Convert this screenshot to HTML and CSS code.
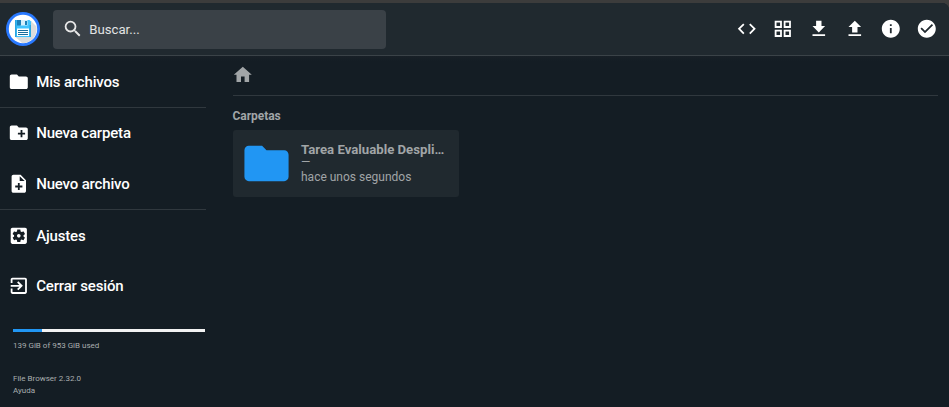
FILE: index.html
```
<!DOCTYPE html>
<html lang="es">
<head>
<meta charset="utf-8">
<title>File Browser</title>
<link rel="stylesheet" href="styles.css">
</head>
<body>
<div class="app">
  <header class="topbar">
    <svg class="logo" viewBox="0 0 34 34">
      <circle cx="17" cy="17" r="17" fill="#2979ff"/>
      <circle cx="17" cy="17" r="14.2" fill="#fff"/>
      <path d="M25 9l5.500 5.500a14.200 14.200 0 0 1-14.500 16.600L9.500 25z" fill="#dcdcdc"/>
      <path d="M9 8h14.500l1.500 1.500V25H9z" fill="#40c4ff"/>
      <path d="M9 8h1.500v17H9zM23.500 13H25v12h-1.500z" fill="#29a5e0"/>
      <path d="M14 8h7.500v5.500H14z" fill="#d5effc"/>
      <path d="M11 8h4v5.500h-4zM19 9h2v4h-2z" fill="#1c7fb8"/>
      <path d="M11 16.500h12V24H11z" fill="#fff"/>
      <path d="M12 18h10v1H12zM12 20h10v1H12zM12 22h10v1H12z" fill="#1b6e9c"/>
    </svg>
    <div class="search">
      <svg class="icon" viewBox="0 0 24 24"><path d="M15.500 14h-.79l-.28-.27A6.471 6.471 0 0 0 16 9.500 6.500 6.500 0 1 0 9.500 16c1.610 0 3.090-.59 4.230-1.570l.27.28v.79l5 4.990L20.490 19l-4.990-5zm-6 0C7.010 14 5 11.990 5 9.500S7.010 5 9.500 5 14 7.010 14 9.500 11.990 14 9.500 14z"/></svg>
      <span>Buscar...</span>
    </div>
    <div class="actions">
      <svg class="icon" viewBox="0 0 24 24"><path d="M9.400 16.600L4.800 12l4.600-4.600L8 6l-6 6 6 6 1.400-1.400zm5.200 0l4.600-4.600-4.600-4.600L16 6l6 6-6 6-1.400-1.400z"/></svg>
      <svg class="icon" viewBox="0 0 24 24"><path fill-rule="evenodd" d="M3 3v8h8V3H3zm6 6H5V5h4v4zm-6 4v8h8v-8H3zm6 6H5v-4h4v4zm4-16v8h8V3h-8zm6 6h-4V5h4v4zm-6 4v8h8v-8h-8zm6 6h-4v-4h4v4z"/></svg>
      <svg class="icon" viewBox="0 0 24 24"><path d="M19 9h-4V3H9v6H5l7 7 7-7zM5 18v2h14v-2H5z"/></svg>
      <svg class="icon" viewBox="0 0 24 24"><path d="M9 16h6v-6h4l-7-7-7 7h4v6zm-4 2h14v2H5v-2z"/></svg>
      <svg class="icon" viewBox="0 0 24 24"><path d="M12 2C6.480 2 2 6.480 2 12s4.480 10 10 10 10-4.480 10-10S17.520 2 12 2zm1 15h-2v-6h2v6zm0-8h-2V7h2v2z"/></svg>
      <svg class="icon" viewBox="0 0 24 24"><path d="M12 2C6.480 2 2 6.480 2 12s4.480 10 10 10 10-4.480 10-10S17.520 2 12 2zm-2 15l-5-5 1.410-1.410L10 14.170l7.590-7.590L19 8l-9 9z"/></svg>
    </div>
  </header>
  <div class="body">
    <nav class="sidebar">
      <div class="group files">
        <a class="item"><svg class="icon" viewBox="0 0 24 24"><path d="M10 4H4c-1.100 0-1.990.9-1.990 2L2 18c0 1.100.9 2 2 2h16c1.100 0 2-.9 2-2V8c0-1.100-.9-2-2-2h-8l-2-2z"/></svg><span>Mis archivos</span></a>
      </div>
      <div class="group">
        <a class="item"><svg class="icon" viewBox="0 0 24 24"><path d="M20 6h-8l-2-2H4c-1.110 0-1.990.89-1.990 2L2 18c0 1.110.89 2 2 2h16c1.110 0 2-.89 2-2V8c0-1.110-.89-2-2-2zm-1 8h-3v3h-2v-3h-3v-2h3V9h2v3h3v2z"/></svg><span>Nueva carpeta</span></a>
        <a class="item"><svg class="icon" viewBox="0 0 24 24"><path d="M14 2H6c-1.100 0-1.990.9-1.990 2L4 20c0 1.100.89 2 1.990 2H18c1.100 0 2-.9 2-2V8l-6-6zm2 14h-3v3h-2v-3H8v-2h3v-3h2v3h3v2zm-3-7V3.500L18.500 9H13z"/></svg><span>Nuevo archivo</span></a>
      </div>
      <div class="group account">
        <a class="item"><svg class="icon" viewBox="0 0 24 24"><path d="M12 10c-1.100 0-2 .9-2 2s.9 2 2 2 2-.9 2-2-.9-2-2-2zm7-7H5c-1.110 0-2 .9-2 2v14c0 1.100.89 2 2 2h14c1.110 0 2-.9 2-2V5c0-1.100-.89-2-2-2zm-1.750 9c0 .23-.02.46-.05.68l1.480 1.160c.13.11.17.3.08.45l-1.400 2.420c-.09.15-.27.21-.43.15l-1.740-.7c-.36.28-.76.51-1.180.69l-.26 1.850c-.03.17-.18.3-.35.3h-2.800c-.17 0-.32-.13-.35-.29l-.26-1.850c-.43-.18-.82-.41-1.180-.69l-1.740.7c-.16.06-.34 0-.43-.15l-1.400-2.420c-.09-.15-.05-.34.08-.45l1.480-1.160c-.03-.23-.05-.46-.05-.69s.02-.46.05-.68l-1.480-1.160c-.13-.11-.17-.3-.08-.45l1.400-2.420c.09-.15.27-.21.43-.15l1.740.7c.36-.28.76-.51 1.180-.69l.26-1.850c.03-.17.18-.3.35-.3h2.800c.17 0 .32.13.35.29l.26 1.850c.43.18.82.41 1.180.69l1.740-.7c.16-.06.34 0 .43.15l1.400 2.420c.09.15.05.34-.08.45l-1.480 1.160c.03.23.05.46.05.69z"/></svg><span>Ajustes</span></a>
        <a class="item"><svg class="icon" viewBox="0 0 24 24"><path d="M10.090 15.590L11.500 17l5-5-5-5-1.410 1.410L12.670 11H3v2h9.670l-2.580 2.590zM19 3H5c-1.110 0-2 .9-2 2v4h2V5h14v14H5v-4H3v4c0 1.100.89 2 2 2h14c1.100 0 2-.9 2-2V5c0-1.100-.9-2-2-2z"/></svg><span>Cerrar sesión</span></a>
      </div>
      <div class="usage"><div class="used"></div></div>
      <p class="credit">139 GiB of 953 GiB used</p>
      <p class="credit version">File Browser 2.32.0</p>
      <p class="credit">Ayuda</p>
    </nav>
    <main class="listing">
      <div class="breadcrumbs"><svg class="icon" viewBox="0 0 24 24"><path d="M10 20v-6h4v6h5v-8h3L12 3 2 12h3v8z"/></svg></div>
      <h2>Carpetas</h2>
      <div class="card">
        <svg class="folder" viewBox="0 0 24 24"><path d="M10 4H4c-1.100 0-1.990.9-1.990 2L2 18c0 1.100.9 2 2 2h16c1.100 0 2-.9 2-2V8c0-1.100-.9-2-2-2h-8l-2-2z"/></svg>
        <div class="meta">
          <p class="name">Tarea Evaluable Despli…</p>
          <p class="size">—</p>
          <p class="modified">hace unos segundos</p>
        </div>
      </div>
    </main>
  </div>
</div>
</body>
</html>
```
FILE: styles.css
```
* { box-sizing: border-box; }
body { margin: 0; background: #3c3c3c; font-family: Roboto, sans-serif; padding-top: 3px; overflow: hidden; }
p, h2 { margin: 0; }
svg { display: block; flex: none; }
.icon { width: 21.6px; height: 21.6px; fill: #fff; }
.app { height: 404px; background: #141d24; border-top-right-radius: 7px; overflow: hidden; }
.topbar { height: 53px; background: #20292f; border-bottom: 1px solid #3b4348; display: flex; align-items: center; padding: 0 11.4px 0 6px; }
.logo { width: 34px; height: 34px; }
.search { width: 333px; height: 39px; margin-left: 13px; padding-left: 9px; border-radius: 4px; background: #3a4147; color: #e2e3e4; display: flex; align-items: center; gap: 5.600px; font-size: 13.2px; }
.search .icon { fill: #e8e8e8; }
.actions { margin-left: auto; display: flex; gap: 14.4px; }
.body { display: flex; background: linear-gradient(#182027, #141d24 5px); }
.sidebar { width: 206px; }
.group { border-bottom: 1px solid #30383e; }
.item { height: 50.5px; padding-left: 7.600px; display: flex; align-items: center; gap: 7px; color: #fff; font-size: 15px; font-weight: 500; letter-spacing: -.17px; }
.files { padding-top: 1px; }
.files .item { height: 50px; }
.account { padding-top: 1px; border: 0; }
.account .item { height: 50px; }
.usage { height: 3px; margin: 18px 1px 0 13px; background: #f2f2f2; }
.used { width: 29px; height: 3px; background: #2196f3; }
.credit { margin-left: 13px; font-size: 8px; line-height: 12px; color: #a9adaf; }
.usage + .credit { margin-top: 8px; }
.version { margin-top: 21px; }
.listing { margin-left: 27px; width: 705px; color: #a1a5a7; }
.breadcrumbs { height: 40px; padding-top: 7.600px; border-bottom: 1px solid #30383e; }
.breadcrumbs .icon { fill: #a1a5a7; margin-left: -.8px; }
h2 { font-size: 12px; line-height: 16px; font-weight: 700; margin: 12px 0 0 -.5px; letter-spacing: -.05px; }
.card { width: 226px; height: 67px; margin-top: 6px; padding: 7px; background: #20292f; border-radius: 3px; display: flex; }
.folder { width: 53px; height: 53px; fill: #2196f3; }
.meta { margin-left: 8px; width: 147px; font-size: 12px; }
.name { margin-top: 5px; font-size: 13.2px; line-height: 16px; font-weight: 700; white-space: nowrap; }
.size { font-size: 12px; line-height: 9px; }
.modified { line-height: 20px; }
```
